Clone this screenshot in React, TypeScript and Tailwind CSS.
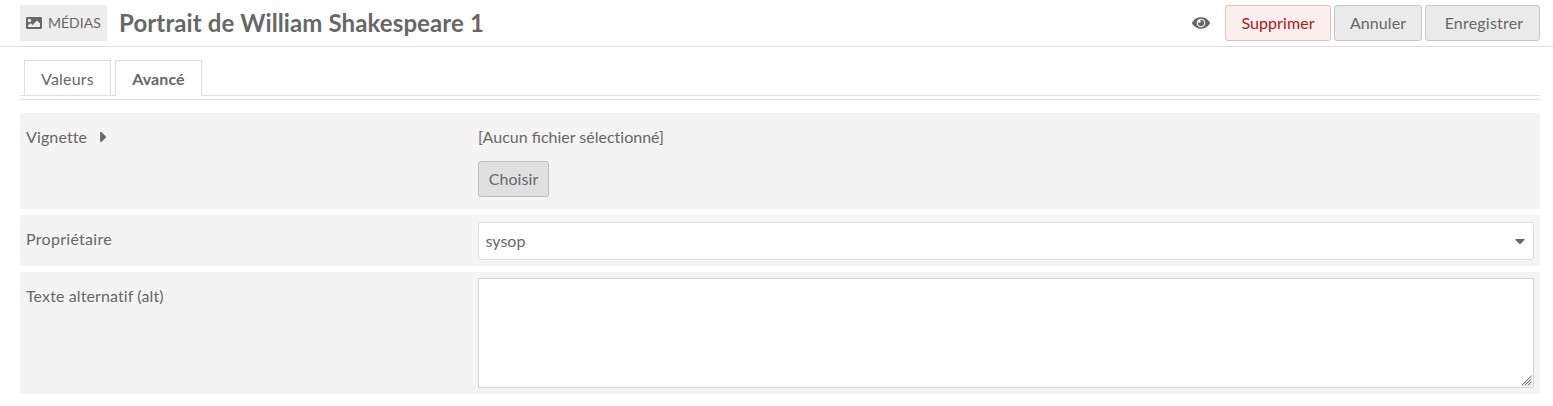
import type { ReactNode } from "react";
import { FaCaretDown, FaCaretRight, FaImage } from "react-icons/fa";

function EyeIcon() {
  return (
    <svg viewBox="0 0 576 512" className="h-4 w-[18px]" fill="currentColor">
      <path d="M569.354 231.631C512.969 135.949 407.81 72 288 72 168.14 72 63.004 135.994 6.646 231.631a47.999 47.999 0 0 0 0 48.739C63.031 376.051 168.19 440 288 440c119.86 0 224.996-63.994 281.354-159.631a47.997 47.997 0 0 0 0-48.738zM288 392c-75.162 0-136-60.827-136-136 0-75.162 60.826-136 136-136 75.162 0 136 60.826 136 136 0 75.162-60.826 136-136 136zm104-136c0 57.438-46.562 104-104 104s-104-46.562-104-104c0-17.708 4.431-34.379 12.236-48.973l-.001.032c0 23.651 19.173 42.823 42.824 42.823s42.824-19.173 42.824-42.823c0-23.651-19.173-42.824-42.824-42.824l-.032.001C253.621 156.431 270.292 152 288 152c57.438 0 104 46.562 104 104z" />
    </svg>
  );
}

function ResizeGrip() {
  return (
    <svg viewBox="0 0 11 11" className="pointer-events-none absolute right-[2px] bottom-[2px] size-[11px]" fill="none">
      <path d="M0.5 10.5 10.5 0.5M3.5 10.5 10.5 3.5M6.5 10.5 10.5 6.5M9.5 10.5 10.5 9.5" stroke="#808080" />
      <path d="M1.5 10.5 10.5 1.5M4.5 10.5 10.5 4.5M7.5 10.5 10.5 7.5" stroke="#bbbbbb" strokeWidth="0.8" />
    </svg>
  );
}

function Field({ label, className, children }: { label: ReactNode; className: string; children: ReactNode }) {
  return (
    <div className={`flex bg-[#f4f4f4] px-1.5 ${className}`}>
      <div className="flex h-6 w-[452px] shrink-0 items-center">{label}</div>
      {children}
    </div>
  );
}

function Header() {
  return (
    <header className="flex h-[47px] items-start border-b border-[#dfdfdf] pt-[5px] pr-[13px] pl-5">
      <div className="flex h-9 w-[87px] items-center gap-1.5 bg-[#ededed] pl-1.5 text-sm">
        <FaImage className="size-4" />
        <span>MÉDIAS</span>
      </div>
      <h1 className="ml-3 text-2xl leading-9 font-bold tracking-[0.11px]">Portrait de William Shakespeare 1</h1>
      <div className="ml-auto flex h-9 items-center gap-[3px]">
        <button aria-label="Rendre privé" className="mr-3">
          <EyeIcon />
        </button>
        <button className="h-9 w-[106px] rounded-[3px] border border-[#dfbfbf] bg-[#ffeeee] tracking-[0.07px] text-[#a91919]">Supprimer</button>
        <button className="h-9 w-[88px] rounded-[3px] border border-[#c7c7c7] bg-[#eaeaea] tracking-[0.07px]">Annuler</button>
        <button className="h-9 w-[115px] rounded-[3px] border border-[#c7c7c7] bg-[#eaeaea] pl-[3px] tracking-[0.2px]">Enregistrer</button>
      </div>
    </header>
  );
}

export default function App() {
  return (
    <div className="h-[406px] w-[1553px] overflow-hidden bg-white font-['Lato',sans-serif] text-base text-[#676767]">
      <Header />
      <main className="pt-[13px] pr-[13px] pl-5">
        <nav className="flex h-10 items-start border-b border-[#dfdfdf]">
          <div className="flex h-9 w-full items-end">
            <span className="h-9 w-1 border-b border-[#dfdfdf]" />
            <a className="h-9 w-[87px] border border-[#dfdfdf] text-center leading-[36px] tracking-[0.2px]">Valeurs</a>
            <span className="h-9 w-1 border-b border-[#dfdfdf]" />
            <a className="h-9 w-[87px] border border-b-0 border-[#dfdfdf] text-center leading-[36px] font-bold tracking-[0.1px]">Avancé</a>
            <span className="h-9 flex-1 border-b border-[#dfdfdf]" />
          </div>
        </nav>
        <div className="mt-[13px] flex flex-col gap-1.5">
          <Field
            className="h-24 pt-3"
            label={
              <>
                <span className="tracking-[0.12px]">Vignette</span>
                <FaCaretRight className="ml-[13px] h-[18px] w-[7px]" />
              </>
            }
          >
            <div className="flex flex-col items-start gap-3">
              <span className="leading-6">
                [Aucun fichier <span className="[font-variant-ligatures:none]">sélectionné]</span>
              </span>
              <button className="h-9 w-[71px] rounded-[3px] border border-[#bdbdbd] bg-[#e0e0e0] tracking-[0.07px]">Choisir</button>
            </div>
          </Field>
          <Field className="h-[51px] pt-3" label={<span className="tracking-[0.29px]">Propriétaire</span>}>
            <div className="-mt-[5px] flex h-[38px] flex-1 items-center justify-between rounded-[3px] border border-[#dfdfdf] bg-white pr-2 pl-[6.5px]">
              <span>sysop</span>
              <FaCaretDown className="h-4 w-2.5" />
            </div>
          </Field>
          <Field className="h-[122px] pt-3" label={<span className="tracking-[0.11px]">Texte alternatif (alt)</span>}>
            <div className="relative -mt-1.5 flex h-[110px] flex-1">
              <textarea
                aria-label="Texte alternatif (alt)"
                className="h-full w-full resize-none border border-[#d5d5d5] bg-white p-1.5"
              />
              <ResizeGrip />
            </div>
          </Field>
        </div>
      </main>
    </div>
  );
}
